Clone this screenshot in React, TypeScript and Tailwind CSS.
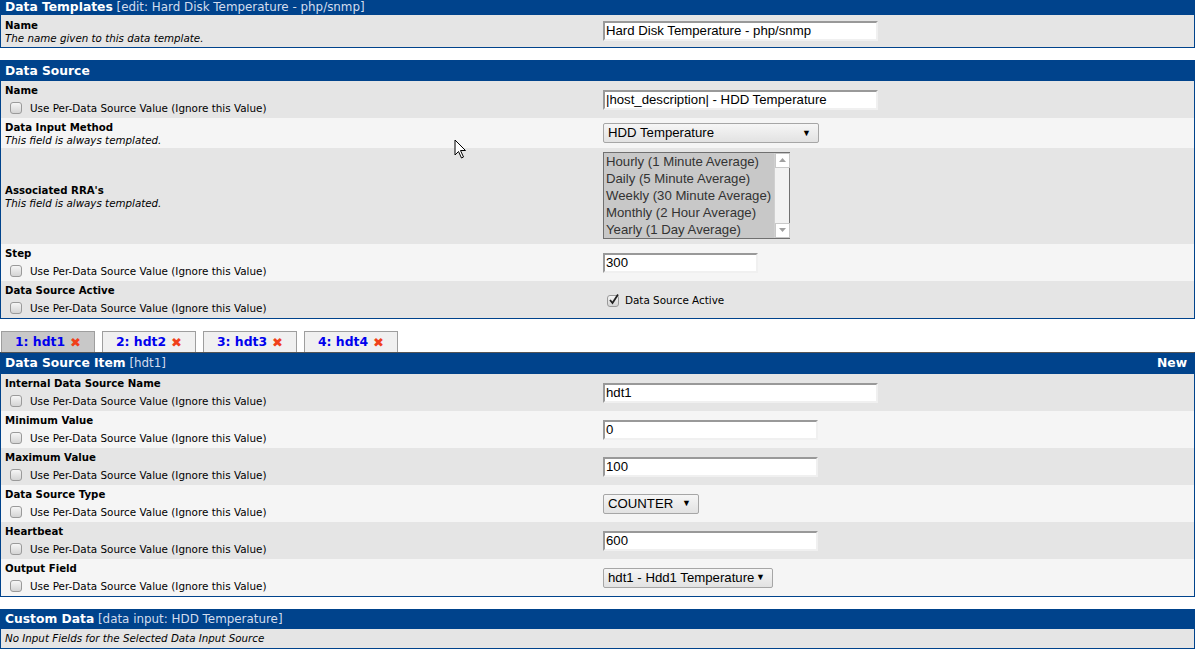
import React from "react";

const font = "font-['DejaVu_Sans','Verdana',sans-serif]";
const arial = "font-['Liberation_Sans','Arial',sans-serif]";

function Check({ checked = false }: { checked?: boolean }) {
  return (
    <span className="relative inline-block w-[12px] h-[12px] rounded-[3px] border border-[#9a9a9a] bg-gradient-to-b from-[#f6f6f6] to-[#d4d4d4] shrink-0">
      {checked && (
        <svg className="absolute left-[0px] top-[-3px]" width="12" height="13" viewBox="0 0 12 13">
          <path d="M2 7 L4.5 10 L10 1.5" stroke="#222" strokeWidth="1.8" fill="none" />
        </svg>
      )}
    </span>
  );
}

function PerDS() {
  return (
    <div className="flex items-center h-[14px] mt-[4px] pl-[9px]">
      <Check />
      <span className="ml-[8px] text-[10.4px] leading-[13px] text-black">Use Per-Data Source Value (Ignore this Value)</span>
    </div>
  );
}

function TextInput({ value, w }: { value: string; w: string }) {
  return (
    <div
      className={`${w} h-[20px] bg-white border-2 border-t-[#999] border-l-[#999] border-r-[#f0f0f0] border-b-[#f0f0f0] flex items-center pl-[1px] ${arial} text-[13.2px] text-black`}
    >
      {value}
    </div>
  );
}

function SelectBox({ value, w }: { value: string; w: string }) {
  return (
    <div
      className={`${w} h-[20px] bg-gradient-to-b from-[#f6f6f6] to-[#e2e2e2] border border-[#a6a6a6] rounded-[2px] flex items-center justify-between pl-[4px] pr-[7px] ${arial} text-[13.2px] text-black`}
    >
      <span>{value}</span>
      <span className="text-[9px] leading-none">▼</span>
    </div>
  );
}

function Row({
  bg,
  h,
  label,
  sub,
  perDS,
  children,
}: {
  bg: "a" | "b";
  h: string;
  label: string;
  sub?: string;
  perDS?: boolean;
  children?: React.ReactNode;
}) {
  return (
    <div className={`flex ${h} ${bg === "a" ? "bg-[#e5e5e5]" : "bg-[#f5f5f5]"}`}>
      <div className="w-[599px] flex flex-col justify-center">
        <div className="pl-[4px] text-[10.2px] leading-[13px] font-bold text-black">{label}</div>
        {sub && <div className="pl-[4px] text-[10.3px] leading-[12px] italic text-black">{sub}</div>}
        {perDS && <PerDS />}
      </div>
      <div className="flex-1 flex items-center pl-[3px]">{children}</div>
    </div>
  );
}

function Header({ title, extra, right, h }: { title: string; extra?: string; right?: string; h: string }) {
  return (
    <div className={`${h} bg-[#00438c] flex items-center justify-between px-[4px] text-white`}>
      <div className="text-[12.3px] leading-[15px]">
        <span className="font-bold">{title}</span>
        {extra && <span className="text-[11.9px] text-[#d3ddee]"> {extra}</span>}
      </div>
      {right && <span className="text-[12.3px] font-bold pr-[3px]">{right}</span>}
    </div>
  );
}

function Tab({ label, active }: { label: string; active?: boolean }) {
  return (
    <div
      className={`w-[94px] h-[21px] border border-b-0 border-[#9e9e9e] flex items-center justify-center text-[12.4px] font-bold text-[#0000ee] ${
        active ? "bg-[#c8c8c8]" : "bg-[#f0f0f0]"
      }`}
    >
      <span>{label}</span>
      <span className="ml-[5px] text-[#f0401a] text-[13px] font-black leading-none">✖</span>
    </div>
  );
}

export default function App() {
  return (
    <div className={`${font} relative w-[1200px] h-[649px] bg-white overflow-hidden`}>
      {/* Table 1 */}
      <div className="w-[1195px] border border-t-0 border-[#00438c]">
        <Header h="h-[15px]" title="Data Templates" extra="[edit: Hard Disk Temperature - php/snmp]" />
        <Row bg="a" h="h-[32px]" label="Name" sub="The name given to this data template.">
          <TextInput value="Hard Disk Temperature - php/snmp" w="w-[275px]" />
        </Row>
      </div>

      {/* Table 2 */}
      <div className="mt-[12px] w-[1195px] border border-[#00438c]">
        <Header h="h-[20px]" title="Data Source" />
        <Row bg="a" h="h-[37px]" label="Name" perDS>
          <TextInput value="|host_description| - HDD Temperature" w="w-[275px]" />
        </Row>
        <Row bg="b" h="h-[30px]" label="Data Input Method" sub="This field is always templated.">
          <SelectBox value="HDD Temperature" w="w-[216px]" />
        </Row>
        <Row bg="a" h="h-[96px]" label="Associated RRA's" sub="This field is always templated.">
          <div className="w-[187px] h-[87px] border border-[#707070] bg-[#c8c8c8] flex mt-[-2px]">
            <div className={`flex-1 ${arial} text-[13.2px] leading-[17px] text-[#333] pl-[2px]`}>
              <div>Hourly (1 Minute Average)</div>
              <div>Daily (5 Minute Average)</div>
              <div className="whitespace-nowrap">Weekly (30 Minute Average)</div>
              <div>Monthly (2 Hour Average)</div>
              <div>Yearly (1 Day Average)</div>
            </div>
            <div className="w-[15px] bg-[#f2f2f2] border-l border-[#d0d0d0] flex flex-col justify-between items-center">
              <div className="w-[15px] h-[15px] bg-white border border-[#c8c8c8] flex items-center justify-center">
                <svg width="7" height="4" viewBox="0 0 7 4"><path d="M0 4 L3.5 0 L7 4Z" fill="#a0a0a0" /></svg>
              </div>
              <div className="w-[15px] h-[15px] bg-white border border-[#c8c8c8] flex items-center justify-center">
                <svg width="7" height="4" viewBox="0 0 7 4"><path d="M0 0 L3.5 4 L7 0Z" fill="#a0a0a0" /></svg>
              </div>
            </div>
          </div>
        </Row>
        <Row bg="b" h="h-[37px]" label="Step" perDS>
          <TextInput value="300" w="w-[155px]" />
        </Row>
        <Row bg="a" h="h-[37px]" label="Data Source Active" perDS>
          <div className="flex items-center pl-[4px] mt-[3px]">
            <Check checked />
            <span className="ml-[6px] text-[10.4px] text-black">Data Source Active</span>
          </div>
        </Row>
      </div>

      {/* Tabs */}
      <div className="mt-[12px] flex gap-[7px] pl-[1px]">
        <Tab label="1: hdt1" active />
        <Tab label="2: hdt2" />
        <Tab label="3: hdt3" />
        <Tab label="4: hdt4" />
      </div>

      {/* Table 3 */}
      <div className="w-[1195px] border border-[#00438c] border-t-[#555]">
        <Header h="h-[21px]" title="Data Source Item" extra="[hdt1]" right="New" />
        <Row bg="a" h="h-[37px]" label="Internal Data Source Name" perDS>
          <TextInput value="hdt1" w="w-[275px]" />
        </Row>
        <Row bg="b" h="h-[37px]" label="Minimum Value" perDS>
          <TextInput value="0" w="w-[215px]" />
        </Row>
        <Row bg="a" h="h-[37px]" label="Maximum Value" perDS>
          <TextInput value="100" w="w-[215px]" />
        </Row>
        <Row bg="b" h="h-[37px]" label="Data Source Type" perDS>
          <SelectBox value="COUNTER" w="w-[96px]" />
        </Row>
        <Row bg="a" h="h-[37px]" label="Heartbeat" perDS>
          <TextInput value="600" w="w-[215px]" />
        </Row>
        <Row bg="b" h="h-[37px]" label="Output Field" perDS>
          <SelectBox value="hdt1 - Hdd1 Temperature" w="w-[170px]" />
        </Row>
      </div>

      {/* Table 4 */}
      <div className="mt-[12px] w-[1195px] border border-[#00438c]">
        <Header h="h-[19px]" title="Custom Data" extra="[data input: HDD Temperature]" />
        <div className="h-[19px] bg-[#e5e5e5] flex items-center pl-[4px] text-[10.3px] italic text-black">
          No Input Fields for the Selected Data Input Source
        </div>
      </div>

      {/* Mouse cursor overlay */}
      <svg className="absolute left-[454px] top-[139px]" width="14" height="21" viewBox="0 0 14 21">
        <path d="M1 1 L1 16 L4.5 12.5 L7.5 19 L9.5 18 L6.5 11.5 L11.5 11.5 Z" fill="white" stroke="black" strokeWidth="1" />
      </svg>
    </div>
  );
}
